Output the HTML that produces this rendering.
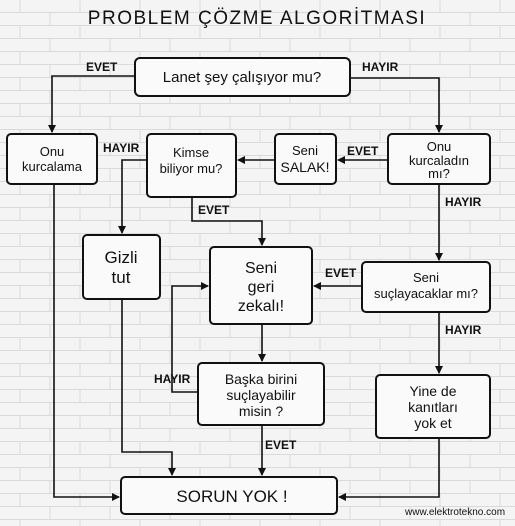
<!DOCTYPE html>
<html><head><meta charset="utf-8"><style>
html,body{margin:0;padding:0;background:#f3f3f3}
svg{display:block}
text{font-family:"Liberation Sans",sans-serif;fill:#111}
</style></head><body>
<svg width="515" height="526" viewBox="0 0 515 526" xmlns="http://www.w3.org/2000/svg">
<defs>
<pattern id="br" width="60" height="26" patternUnits="userSpaceOnUse">
<rect width="60" height="26" fill="#f4f4f4"/>
<path d="M0 12.5H60M0 25.5H60M20 0V12.5M50 13V26" stroke="#dadada" stroke-width="1" fill="none"/>
</pattern>
<marker id="a" markerWidth="8" markerHeight="8" refX="7" refY="4" orient="auto" markerUnits="userSpaceOnUse"><path d="M0 0L8 4L0 8z" fill="#111"/></marker>
</defs>
<rect width="515" height="526" fill="url(#br)"/>
<text x="257" y="24" text-anchor="middle" font-size="19" letter-spacing="1.5">PROBLEM ÇÖZME ALGORİTMASI</text>
<g fill="#fafafa" stroke="#111" stroke-width="2">
<rect x="135" y="58" width="215" height="38" rx="5"/>
<rect x="7" y="134" width="90" height="50" rx="4"/>
<rect x="147" y="134" width="89" height="63" rx="4"/>
<rect x="275" y="134" width="61" height="50" rx="4"/>
<rect x="388" y="134" width="102" height="50" rx="4"/>
<rect x="83" y="235" width="77" height="64" rx="4"/>
<rect x="210" y="247" width="102" height="77" rx="4"/>
<rect x="362" y="262" width="128" height="50" rx="4"/>
<rect x="198" y="363" width="126" height="62" rx="4"/>
<rect x="376" y="375" width="114" height="63" rx="4"/>
<rect x="121" y="477" width="216" height="37" rx="4"/>
</g>
<g stroke="#111" stroke-width="1.6" fill="none">
<path d="M135 76H52V132" marker-end="url(#a)"/>
<path d="M350 78H439V132" marker-end="url(#a)"/>
<path d="M54 184V497H119" marker-end="url(#a)"/>
<path d="M275 160H238" marker-end="url(#a)"/>
<path d="M388 160H338" marker-end="url(#a)"/>
<path d="M147 160H122V233" marker-end="url(#a)"/>
<path d="M122 299V452H172V475" marker-end="url(#a)"/>
<path d="M192 197V221H262V245" marker-end="url(#a)"/>
<path d="M439 184V260" marker-end="url(#a)"/>
<path d="M362 286H314" marker-end="url(#a)"/>
<path d="M439 312V373" marker-end="url(#a)"/>
<path d="M262 324V361" marker-end="url(#a)"/>
<path d="M198 392H172V286H208" marker-end="url(#a)"/>
<path d="M262 425V475" marker-end="url(#a)"/>
<path d="M439 438V497H339" marker-end="url(#a)"/>
</g>
<g font-size="13" text-anchor="middle">
<text x="242" y="82" font-size="15">Lanet şey çalışıyor mu?</text>
<text x="52" y="156">Onu</text><text x="52" y="171">kurcalama</text>
<text x="191" y="157">Kimse</text><text x="191" y="173">biliyor mu?</text>
<text x="305" y="155">Seni</text><text x="305" y="172" font-size="14">SALAK!</text>
<text x="439" y="151">Onu</text><text x="439" y="165">kurcaladın</text><text x="439" y="178">mı?</text>
<text x="121" y="263" font-size="17">Gizli</text><text x="121" y="283" font-size="17">tut</text>
<text x="261" y="273" font-size="16">Seni</text><text x="261" y="292" font-size="16">geri</text><text x="261" y="311" font-size="16">zekalı!</text>
<text x="426" y="282">Seni</text><text x="426" y="298">suçlayacaklar mı?</text>
<text x="261" y="384" font-size="14">Başka birini</text><text x="261" y="400" font-size="14">suçlayabilir</text><text x="261" y="416" font-size="14">misin ?</text>
<text x="433" y="396" font-size="14">Yine de</text><text x="433" y="412" font-size="14">kanıtları</text><text x="433" y="428" font-size="14">yok et</text>
<text x="232" y="502" font-size="17">SORUN YOK !</text>
</g>
<g font-size="12" font-weight="bold">
<text x="86" y="71">EVET</text>
<text x="362" y="71">HAYIR</text>
<text x="103" y="152">HAYIR</text>
<text x="347" y="155">EVET</text>
<text x="198" y="214">EVET</text>
<text x="445" y="206">HAYIR</text>
<text x="325" y="277">EVET</text>
<text x="445" y="334">HAYIR</text>
<text x="154" y="383">HAYIR</text>
<text x="265" y="449">EVET</text>
</g>
<text x="405" y="515" font-size="10" fill="#222">www.elektrotekno.com</text>
</svg>
</body></html>
